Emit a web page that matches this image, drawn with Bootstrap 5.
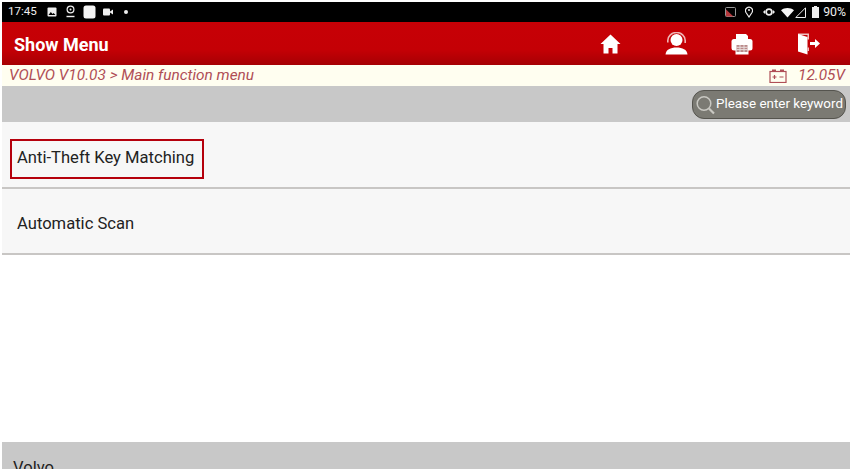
<!DOCTYPE html>
<html lang="en">
<head>
  <meta charset="UTF-8" />
  <title>Show Menu</title>
  <link href="https://cdn.jsdelivr.net/npm/bootstrap@5.3.0/dist/css/bootstrap.min.css" rel="stylesheet">
  <style>
    html, body { height: 469px; overflow: hidden; background: #fff; }
    body { font-family: Roboto, "Liberation Sans", sans-serif; padding: 2px 0 0 2px; }
    .screen { height: 467px; }
    .status-bar { height: 20px; background: #000; color: #eee; font-size: 12.3px; padding: 0 4px 0 6px; }
    .status-bar svg { display: block; flex-shrink: 0; }
    .sb-time { font-size: 11.6px; }
    .sb-g1 { margin-left: 1px; }
    .sb-g4 { margin-left: 4px; }
    .sb-g6 { margin-left: 6px; }
    .sb-g7 { margin-left: 7px; }
    .sb-g8 { margin-left: 8px; }
    .sb-g9 { margin-left: 9px; }
    .sb-g10 { margin-left: 10px; }
    .sb-g11 { margin-left: 11px; }
    .head-bar { height: 43px; background: linear-gradient(#c70006 0, #c40005 65%, #a60004 100%); color: #fff; }
    .head-title { font-size: 18px; font-weight: 700; padding: 2px 0 0 12px; }
    .head-icons { padding-right: 9px; }
    .head-icons > div { width: 66px; }
    .crumb-bar { height: 21px; background: #fffef0; color: #b04e56; font-size: 15.4px; font-style: italic; padding: 1px 5px 0 7px; }
    .search-bar { height: 36px; background: #c8c8c8; padding: 4px 4px 0 0; }
    .search-pill { width: 154px; height: 29px; background: #7b7a73; border: 1px solid #55544e; border-radius: 12px; color: #fff; font-size: 13.4px; padding-left: 1px; white-space: nowrap; }
    .search-pill svg { flex-shrink: 0; }
    .menu-row { height: 66.5px; background: #f7f7f7; border-bottom: 2px solid #c8c6c4; font-size: 16.6px; color: #222; padding: 8px 0 0 15px; }
    .menu-mark { border: 2px solid #b5000c; margin: 2px 0 0 -7px; padding: 6px 8px 8px 5px; line-height: 22px; }
    .foot-bar { height: 27px; background: #c8c8c8; color: #222; font-size: 16.6px; padding: 16px 0 0 11px; line-height: 19px; }
  </style>
</head>
<body>
  <div class="screen d-flex flex-column">
    <!-- status bar -->
    <div class="status-bar d-flex align-items-center justify-content-between">
      <div class="d-flex align-items-center">
        <span class="sb-time">17:45</span>
        <svg class="sb-g10" width="10" height="10" viewBox="0 0 10 10"><rect x="0.500" y="0.500" width="9" height="9" rx="1" fill="#eee"/><path d="M1.500 8l2.300-3 1.800 2 1-1 1.900 2z" fill="#000"/></svg>
        <svg class="sb-g9" width="9" height="13" viewBox="0 0 9 13"><circle cx="4.500" cy="4.500" r="3.400" fill="none" stroke="#eee" stroke-width="1.200"/><circle cx="4.500" cy="4.500" r="1" fill="#eee"/><path d="M.5 11.500h8" stroke="#eee" stroke-width="1.400"/></svg>
        <svg class="sb-g8" width="13" height="14" viewBox="0 0 13 14"><rect x="0.500" y="0.500" width="12" height="13" rx="2.500" fill="#f4f4f4"/></svg>
        <svg class="sb-g7" width="10" height="8" viewBox="0 0 10 8"><rect x="0" y="0.500" width="7" height="7" rx="1" fill="#eee"/><path d="M7 3.500L10 1.500V6.500L7 4.500z" fill="#eee"/></svg>
        <svg class="sb-g11" width="4" height="4" viewBox="0 0 4 4"><circle cx="2" cy="2" r="2" fill="#eee"/></svg>
      </div>
      <div class="d-flex align-items-center">
        <svg width="11" height="10" viewBox="0 0 11 10"><rect x="0.500" y="0.500" width="10" height="9" rx="1" fill="none" stroke="#999" stroke-width="1"/><path d="M1 2.500l7.500 7H1z" fill="#b5383c"/></svg>
        <svg class="sb-g9" width="8" height="12" viewBox="0 0 8 12"><path d="M4 11L1 6.500A3.500 3.500 0 1 1 7 6.500z" fill="none" stroke="#eee" stroke-width="1.200"/><circle cx="4" cy="4" r="1" fill="#eee"/></svg>
        <svg class="sb-g10" width="12" height="10" viewBox="0 0 12 10"><circle cx="6" cy="5" r="2.900" fill="none" stroke="#eee" stroke-width="1.800"/><path d="M0 5l2-2v4zM12 5l-2-2v4z" fill="#eee"/></svg>
        <svg class="sb-g6" width="13" height="11" viewBox="0 0 13 11"><path d="M6.500 10.500L0 3.200C3.500 .2 9.500 .2 13 3.200z" fill="#f4f4f4"/></svg>
        <svg class="sb-g1" width="11" height="11" viewBox="0 0 11 11"><path d="M.8 10.500L10.500.8v9.700z" fill="none" stroke="#eee" stroke-width="1"/></svg>
        <svg class="sb-g6" width="7" height="12" viewBox="0 0 7 12"><path d="M2 0h3v1h2v11H0V1h2z" fill="#eee"/></svg>
        <span class="sb-g4">90%</span>
      </div>
    </div>

    <!-- title bar -->
    <div class="head-bar d-flex align-items-center justify-content-between">
      <div class="head-title">Show Menu</div>
      <div class="head-icons d-flex align-items-center">
        <div class="d-flex justify-content-center">
          <svg width="21" height="20" viewBox="0 0 21 20"><path d="M10.500 .5L.5 10h3v9.500h5V14h4v5.500h5V10h3z" fill="#fff"/></svg>
        </div>
        <div class="d-flex justify-content-center">
          <svg width="25" height="23" viewBox="0 0 25 23"><circle cx="12.500" cy="8" r="6" fill="#fff"/><path d="M3.800 10.500V8.500a8.700 8 0 0 1 17.400 0V11" fill="none" stroke="#f0b5b5" stroke-width="1.600"/><path d="M1.500 22.500c.5-5 5-7 11-7s10.500 2 11 7z" fill="#fff"/></svg>
        </div>
        <div class="d-flex justify-content-center">
          <svg width="22" height="22" viewBox="0 0 22 22"><path d="M5 1h10l2 2v3H5z" fill="#fff"/><rect x="0.500" y="6" width="21" height="11.500" rx="2.500" fill="#fff"/><rect x="4.500" y="11" width="13" height="10.500" fill="#fff"/><path d="M5.500 12h11v7h-11z" fill="#b98a8a"/><path d="M5.500 14.300h11M5.500 16.600h11M9 12v7M13 12v7" stroke="#e8dcdc" stroke-width="1"/></svg>
        </div>
        <div class="d-flex justify-content-center">
          <svg width="23" height="22" viewBox="0 0 23 22"><path d="M1 .5h11v6h-1.500V2H1z" fill="#f0c0c0"/><path d="M1 1l9.500 3v17.500L1 18.500z" fill="#fff"/><path d="M10.500 14.500H12V18h-1.500z" fill="#f0c0c0"/><path d="M13 9h5V6l5 4.500L18 15v-3h-5z" fill="#fff"/></svg>
        </div>
      </div>
    </div>

    <!-- breadcrumb -->
    <div class="crumb-bar d-flex align-items-center justify-content-between">
      <span>VOLVO V10.03 &gt; Main function menu</span>
      <span class="d-flex align-items-center">
        <svg width="18" height="14" viewBox="0 0 18 14"><rect x="1" y="2.500" width="16" height="11" fill="none" stroke="#b04e56" stroke-width="1.200"/><path d="M3 .5h4v2H3zM11 .5h4v2h-4z" fill="#b04e56"/><path d="M3.500 8h4M5.500 6v4M10.500 8h4" stroke="#b04e56" stroke-width="1.200"/></svg>
        <span class="sb-g11">12.05V</span>
      </span>
    </div>

    <!-- search -->
    <div class="search-bar d-flex justify-content-end">
      <div class="search-pill d-flex align-items-center">
        <svg width="22" height="22" viewBox="0 0 22 22"><circle cx="10" cy="9.500" r="6.800" fill="none" stroke="#c9c8c2" stroke-width="1.500"/><path d="M15 14.500l5 5" stroke="#c9c8c2" stroke-width="2.200"/></svg>
        <span>Please enter keyword</span>
      </div>
    </div>

    <!-- menu -->
    <div class="menu-row d-flex align-items-center"><span class="menu-mark">Anti-Theft Key Matching</span></div>
    <div class="menu-row d-flex align-items-center">Automatic Scan</div>

    <div class="flex-grow-1"></div>
    <div class="foot-bar">Volvo</div>
  </div>
</body>
</html>
